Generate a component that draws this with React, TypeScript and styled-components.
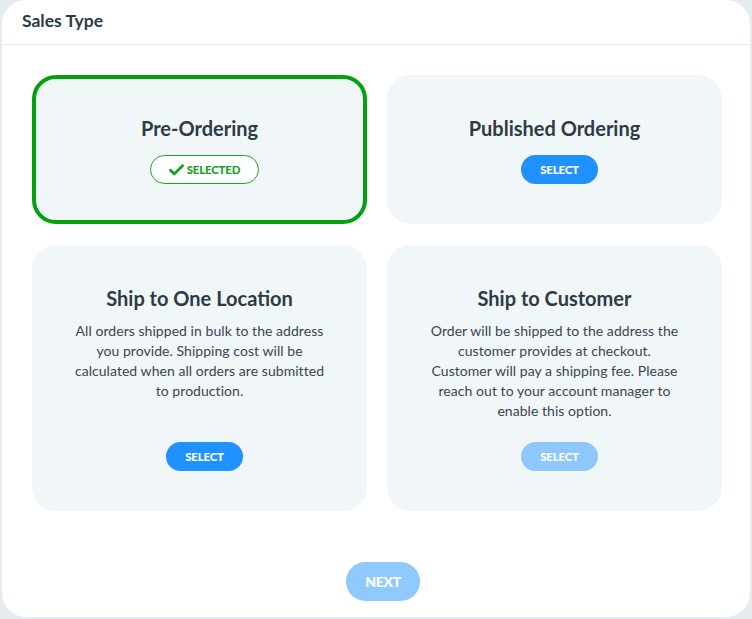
import React from "react";
import styled, { createGlobalStyle } from "styled-components";

const Global = createGlobalStyle`
  html, body { margin: 0; padding: 0; background: #e4ecf0; }
  body { font-family: Lato, "Open Sans", Arial, sans-serif; color: #2d3b45; }
  * { box-sizing: border-box; }
`;

const Page = styled.div`
  width: 752px;
  height: 619px;
  padding: 0 2px 2px 2px;
  display: flex;
`;

const Modal = styled.div`
  flex: 1;
  background: #ffffff;
  border-radius: 24px;
  display: flex;
  flex-direction: column;
  overflow: hidden;
`;

const Header = styled.div`
  height: 45px;
  border-bottom: 1px solid #e6ebee;
  padding: 10px 20px 0;
  font-size: 17.5px;
  font-weight: 700;
  color: #2d3b45;
`;

const Body = styled.div`
  padding: 30px 28px 16px 30px;
  display: flex;
  flex-direction: column;
  align-items: center;
`;

const Grid = styled.div`
  width: 100%;
  display: grid;
  grid-template-columns: 1fr 1fr;
  column-gap: 20px;
  row-gap: 21px;
`;

const Card = styled.div<{ $selected?: boolean }>`
  background: #f1f6f9;
  border-radius: 24px;
  border: 4px solid ${(p) => (p.$selected ? "#00a30b" : "transparent")};
  padding: 38px 36px 36px;
  display: flex;
  flex-direction: column;
  align-items: center;
  text-align: center;
`;

const Title = styled.h2`
  margin: 0;
  font-size: 20px;
  line-height: 22px;
  font-weight: 700;
  color: #2d3b45;
`;

const Desc = styled.p`
  margin: 12px 0 21px;
  font-size: 14px;
  line-height: 20px;
  letter-spacing: 0.05px;
  color: #3a4650;
`;

const Actions = styled.div<{ $tight?: boolean }>`
  margin-top: auto;
  padding-top: ${(p) => (p.$tight ? "0" : "16px")};
  padding-left: 10px;
  display: flex;
  justify-content: center;
`;

const SelectButton = styled.button<{ $disabled?: boolean }>`
  height: 29px;
  width: 77px;
  border: none;
  border-radius: 15px;
  background: ${(p) => (p.$disabled ? "#8fc7fb" : "#1f92ff")};
  color: #ffffff;
  font-family: inherit;
  font-size: 11.5px;
  font-weight: 900;
  letter-spacing: -0.2px;
  cursor: pointer;
`;

const SelectedPill = styled.div`
  height: 29px;
  width: 109px;
  border: 1px solid #16a91f;
  border-radius: 15px;
  background: #ffffff;
  color: #16a21e;
  font-size: 11.5px;
  font-weight: 900;
  display: flex;
  align-items: center;
  justify-content: center;
  gap: 3px;
  letter-spacing: -0.2px;
`;

const NextButton = styled.button`
  margin-top: 51px;
  margin-left: 12px;
  height: 39px;
  width: 74px;
  border: none;
  border-radius: 20px;
  background: #90c9fd;
  color: #ffffff;
  font-family: inherit;
  font-size: 14px;
  font-weight: 900;
  letter-spacing: -0.3px;
`;

const Check = () => (
  <svg width="15" height="12" viewBox="0 0 15 12" aria-hidden>
    <path d="M1.5 6.2 L5.3 10 L13.5 1.8" fill="none" stroke="#16a21e" strokeWidth="2.8" strokeLinecap="round" strokeLinejoin="round" />
  </svg>
);

type Option = {
  title: string;
  desc?: string;
  state: "selected" | "active" | "disabled";
};

const options: Option[] = [
  { title: "Pre-Ordering", state: "selected" },
  { title: "Published Ordering", state: "active" },
  {
    title: "Ship to One Location",
    desc: "All orders shipped in bulk to the address you provide. Shipping cost will be calculated when all orders are submitted to production.",
    state: "active",
  },
  {
    title: "Ship to Customer",
    desc: "Order will be shipped to the address the customer provides at checkout. Customer will pay a shipping fee. Please reach out to your account manager to enable this option.",
    state: "disabled",
  },
];

export default function App() {
  return (
    <>
      <Global />
      <Page>
        <Modal>
          <Header>Sales Type</Header>
          <Body>
            <Grid>
              {options.map((o) => (
                <Card key={o.title} $selected={o.state === "selected"}>
                  <Title>{o.title}</Title>
                  {o.desc && <Desc>{o.desc}</Desc>}
                  <Actions $tight={!!o.desc}>
                    {o.state === "selected" ? (
                      <SelectedPill>
                        <Check />
                        SELECTED
                      </SelectedPill>
                    ) : (
                      <SelectButton $disabled={o.state === "disabled"}>SELECT</SelectButton>
                    )}
                  </Actions>
                </Card>
              ))}
            </Grid>
            <NextButton>NEXT</NextButton>
          </Body>
        </Modal>
      </Page>
    </>
  );
}
